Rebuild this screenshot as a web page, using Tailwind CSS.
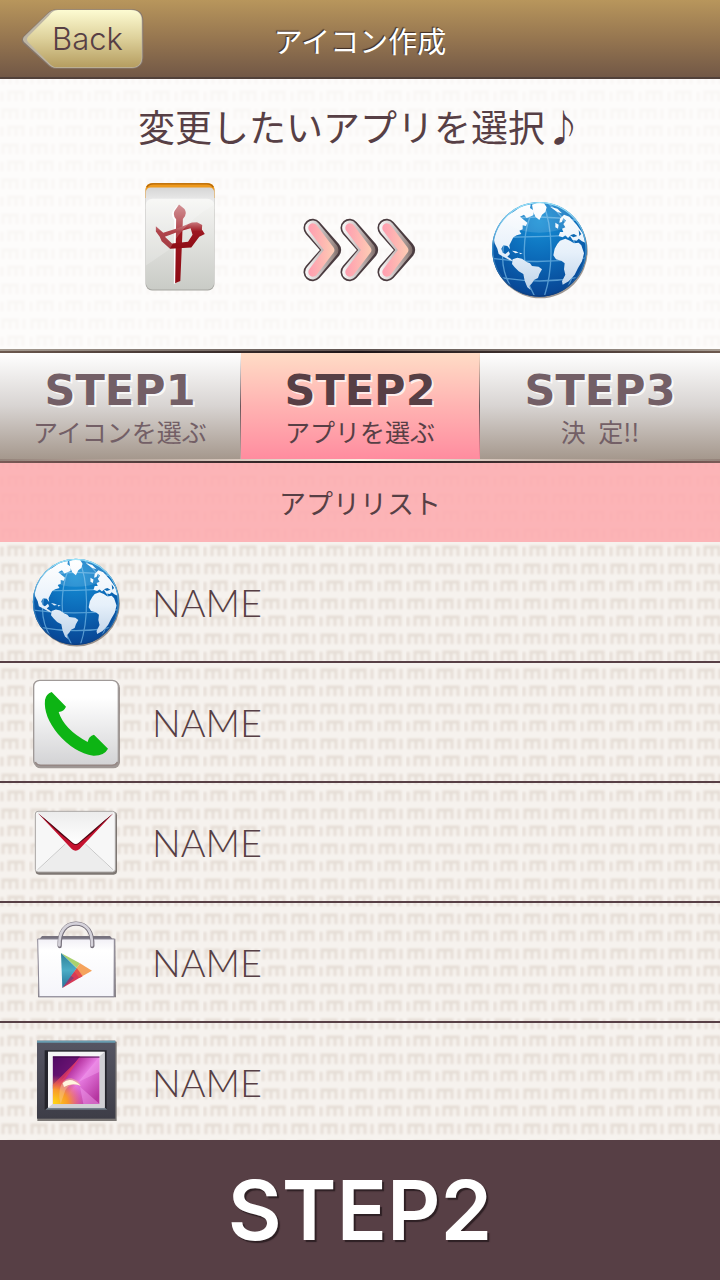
<!DOCTYPE html>
<html lang="ja">
<head>
  <meta charset="UTF-8">
  <meta name="viewport" content="width=device-width, initial-scale=1.0">
  <title>アイコン作成</title>
  <script src="https://cdn.jsdelivr.net/npm/@tailwindcss/browser@4"></script>
</head>
<body class="relative isolate min-h-screen flex flex-col bg-[#f6f2ee] text-[#573f45] font-['Noto_Sans_CJK_JP',sans-serif]">

  <!-- Woven background -->
  <svg class="absolute inset-0 w-full h-full -z-10" aria-hidden="true">
    <defs>
      <filter id="soft" x="-10%" y="-10%" width="120%" height="120%"><feGaussianBlur stdDeviation="1"/></filter>
      <pattern id="weave" width="29" height="35" patternUnits="userSpaceOnUse">
        <g fill="none" stroke="#e5ddd5" stroke-width="3" filter="url(#soft)">
          <path d="M3 14V5H17V14M10 5V14M24 4V14"/>
          <path d="M2 22V31M9 31V22H23V31M16 22V31"/>
        </g>
      </pattern>
    </defs>
    <rect width="100%" height="100%" fill="url(#weave)"/>
  </svg>

  <!-- Shared icon -->
  <svg class="absolute w-0 h-0" aria-hidden="true">
    <defs>
      <radialGradient id="sea" cx=".5" cy=".2" r=".85">
        <stop offset="0" stop-color="#1690d6"/><stop offset=".45" stop-color="#0c6cba"/><stop offset="1" stop-color="#073f8e"/>
      </radialGradient>
      <linearGradient id="land" x1="0" y1="40" x2="0" y2="310" gradientUnits="userSpaceOnUse">
        <stop offset="0" stop-color="#fff"/><stop offset=".55" stop-color="#e6f0fa"/><stop offset="1" stop-color="#b9cfe6"/>
      </linearGradient>
      <linearGradient id="rim" x1="0" y1="0" x2="0" y2="1">
        <stop offset="0" stop-color="#9fe6fb"/><stop offset=".5" stop-color="#3a8fcc"/><stop offset="1" stop-color="#0a3c80"/>
      </linearGradient>
      <clipPath id="disc"><circle cx="178" cy="178" r="140"/></clipPath>
      <symbol id="globe" viewBox="30 30 300 300">
        <circle cx="181" cy="183" r="142" fill="#40352f" opacity=".5" filter="url(#soft)"/>
        <circle cx="178" cy="178" r="142" fill="url(#sea)"/>
        <g clip-path="url(#disc)">
          <g fill="none" stroke="#7fc0ea" stroke-width="4" opacity=".65">
            <path d="M178 34C120 100 120 250 166 322M186 34C222 110 220 240 192 322M160 36C70 90 40 210 98 300M200 36C290 110 310 200 262 295"/>
            <path d="M62 92Q178 70 294 92M40 142Q178 142 318 134M34 205Q178 225 322 203M60 262Q178 284 296 262"/>
          </g>
          <g fill="url(#land)">
            <path d="M100 66L120 52 138 46 152 44 150 54 162 62 160 76 140 84 132 74 120 80 132 90 142 98 138 108 128 106 128 118 118 122 124 132 110 136 100 142 94 154 88 166 90 178 82 168 70 166 64 176 68 188 76 192 86 184 90 192 82 200 92 206 98 214 88 210 70 200 56 192 52 176 44 160 40 140 48 110 70 82Z"/>
            <path d="M96 182L108 184 116 188 106 190ZM118 188L128 190 120 193Z"/>
            <path d="M156 44L172 38 192 40 200 52 196 66 186 74 178 90 166 80 160 66Z"/>
            <path d="M98 208L112 203 126 206 140 216 150 220 156 228 176 230 186 238 178 252 174 264 162 270 156 280 148 288 152 300 142 292 134 272 130 252 116 244 104 232 96 222Z"/>
            <path d="M240 152L256 146 270 152 282 160 296 158 304 166 312 190 306 214 294 234 284 254 266 274 248 284 246 274 256 254 252 238 254 220 244 212 228 208 220 196 224 176 232 162Z"/>
            <path d="M236 138L240 126 250 126 246 116 256 112 250 102 258 92 250 84 246 96 238 98 240 86 252 74 268 80 290 104 308 130 316 158 306 154 296 146 290 152 278 150 270 138 264 144 256 136 248 142Z"/>
            <path d="M226 98L236 104 234 116 226 112ZM210 50L232 56 246 70 232 66Z"/>
          </g>
          <path d="M270 136L282 132 292 138 280 142ZM296 120L304 132 298 138Z" fill="#0d69b3"/>
          <ellipse cx="178" cy="72" rx="112" ry="56" fill="#fff" opacity=".13"/>
        </g>
        <circle cx="178" cy="178" r="140" fill="none" stroke="url(#rim)" stroke-width="4"/>
      </symbol>
    </defs>
  </svg>

  <!-- Header -->
  <header class="relative h-[79px] flex items-center justify-center pt-1 bg-linear-to-b from-[#b8965c] via-[#967650] to-[#725846] border-b-2 border-[#51413a]">
    <button type="button" class="absolute left-5 top-2 w-32 h-16 pl-8 pb-1 text-left text-[31px] leading-none font-light font-[Inter,sans-serif]">
      <svg class="absolute inset-0 w-full h-full" viewBox="60 24 384 192" aria-hidden="true">
        <defs>
          <linearGradient id="gold" x1="0" y1="0" x2="0" y2="1">
            <stop offset="0" stop-color="#fdfbd2"/><stop offset=".5" stop-color="#ddd09a"/><stop offset="1" stop-color="#b59d60"/>
          </linearGradient>
        </defs>
        <path d="M69 110L142 40Q154 28 170 28H398Q430 30 430 64V172Q430 204 398 206H166Q154 206 142 194L69 130Q62 120 69 110Z" fill="#86766a"/>
        <path d="M72 110L142 42Q154 29 170 29H394Q427 30 427 62V170Q427 203 394 204H170Q154 204 142 190L72 126Q66 118 72 110Z" fill="#bdb5a4"/>
        <path d="M84 110L146 48Q158 30 174 30H392Q425 30 425 62V170Q425 202 392 202H172Q158 202 146 188L84 126Q78 118 84 110Z" fill="url(#gold)"/>
      </svg>
      <span class="relative">Back</span>
    </button>
    <h1 class="text-[29px] leading-none text-white [text-shadow:-1px_-1px_1px_#3e2c24]">アイコン作成</h1>
  </header>

  <!-- Preview -->
  <section class="h-[270px] pt-[25px] bg-white/75">
    <h2 class="text-center text-[37px] leading-[44px]">変更したいアプリを選択♪</h2>
    <div class="grid grid-cols-3 w-3/4 mx-auto mt-8 h-[120px] items-center justify-items-center">
      <svg class="w-[78px] h-[140px] pb-7" viewBox="36 24 234 348" role="img" aria-label="中">
        <defs>
          <linearGradient id="tile" x1="0" y1="0" x2="0" y2="1"><stop offset="0" stop-color="#f6f6f4"/><stop offset="1" stop-color="#c9cbc6"/></linearGradient>
          <linearGradient id="tileTop" x1="0" y1="0" x2="0" y2="1"><stop offset="0" stop-color="#d5d5d5"/><stop offset="1" stop-color="#fff"/></linearGradient>
          <linearGradient id="red" x1="0" y1="0" x2="0" y2="1"><stop offset="0" stop-color="#c8777b"/><stop offset=".35" stop-color="#9d1720"/><stop offset="1" stop-color="#8d0b14"/></linearGradient>
        </defs>
        <rect x="46" y="34" width="214" height="333" rx="20" fill="#a5a5a0"/>
        <path d="M46 80V52Q48 33 68 33H238Q258 33 260 52V80Z" fill="#ef9a1d"/>
        <path d="M50 46Q56 36 70 36H236Q250 36 256 46" fill="none" stroke="#b4690b" stroke-width="4"/>
        <rect x="47" y="47" width="212" height="80" rx="14" fill="url(#tileTop)"/>
        <rect x="47" y="82" width="212" height="282" rx="20" fill="url(#tile)"/>
        <path d="M138 345L139 146Q128 134 134 120L148 101 166 114Q176 130 163 145L160 200 154 338Z" fill="#fff" transform="translate(-4 2)"/>
        <g fill="url(#red)">
          <path d="M138 345L141 146Q130 134 136 120L150 100 167 114Q177 130 162 145L160 200 154 338Z"/>
          <path fill-rule="evenodd" d="M78 168L101 188 150 172 190 156 206 155 222 164 221 178 230 192 213 200 188 234 122 238 96 214 90 200 78 184ZM106 200L128 221 178 216 192 194 186 174 150 184Z"/>
        </g>
        <path d="M67 82H238Q258 84 259 102Q170 150 120 240L47 290V102Q48 84 67 82Z" fill="#fff" opacity=".2"/>
      </svg>
      <svg class="w-[116px] h-[66px]" viewBox="38 51 348 198" aria-hidden="true">
        <defs>
          <linearGradient id="edge" x1="43" x2="155" y1="0" y2="0" gradientUnits="userSpaceOnUse"><stop offset="0" stop-color="#fff"/><stop offset=".5" stop-color="#c4bbbb"/><stop offset=".8" stop-color="#9c8c88"/><stop offset="1" stop-color="#6d5a58"/></linearGradient>
          <linearGradient id="peach" x1="60" x2="140" y1="0" y2="0" gradientUnits="userSpaceOnUse"><stop offset="0" stop-color="#ff9fb0"/><stop offset="1" stop-color="#fdcfb4"/></linearGradient>
          <g id="chevron" fill="none" stroke-linecap="round" stroke-linejoin="round">
            <path d="M70 84L128 150L70 216" stroke="#4b3c40" stroke-width="55"/>
            <path d="M70 84L125 150L70 216" stroke="url(#edge)" stroke-width="45"/>
            <path d="M71 84L121 150L71 216" stroke="url(#peach)" stroke-width="28"/>
          </g>
        </defs>
        <use href="#chevron"/><use href="#chevron" x="111"/><use href="#chevron" x="222"/>
      </svg>
      <svg class="w-[100px] h-[100px]" role="img" aria-label="Browser"><use href="#globe"/></svg>
    </div>
  </section>

  <!-- Steps -->
  <div class="h-0.5 bg-linear-to-r from-[#a69c92] via-[#5e5350] to-[#a69c92]"></div>
  <div class="h-0.5 bg-linear-to-r from-[#6c594f] via-[#1d1518] to-[#6c594f]"></div>
  <nav class="grid grid-cols-3 h-[106px] text-center">
    <button type="button" class="pt-1 bg-linear-to-b from-white via-[#d8d4d2] to-[#a5988d] text-[#735f66]">
      <span class="block text-[43px] leading-[46px] font-bold font-['DejaVu_Sans',sans-serif] [text-shadow:2px_2px_0_#fffc]">STEP1</span>
      <span class="block text-[25px] leading-9">アイコンを選ぶ</span>
    </button>
    <button type="button" aria-current="step" class="relative pt-1 bg-linear-to-b from-[#ffdcc6] via-[#ffb3b2] to-[#ff8c9f]">
      <span class="absolute inset-y-0 left-0 w-px bg-linear-to-b from-white via-[#6b565a] to-[#c0a8a4]"></span>
      <span class="absolute inset-y-0 right-0 w-px bg-linear-to-b from-[#ffdcc6] via-[#6b565a] to-[#ff8c9f]"></span>
      <span class="block text-[43px] leading-[46px] font-bold font-['DejaVu_Sans',sans-serif] [text-shadow:2px_2px_0_#fffb]">STEP2</span>
      <span class="block text-[25px] leading-9">アプリを選ぶ</span>
    </button>
    <button type="button" class="pt-1 bg-linear-to-b from-white via-[#d8d4d2] to-[#a5988d] text-[#735f66]">
      <span class="block text-[43px] leading-[46px] font-bold font-['DejaVu_Sans',sans-serif] [text-shadow:2px_2px_0_#fffc]">STEP3</span>
      <span class="block text-[25px] leading-9">決&ensp;定!!</span>
    </button>
  </nav>
  <div class="h-0.5 bg-linear-to-r from-[#94837a] via-[#fdeee2] to-[#94837a]"></div>
  <div class="h-0.5 bg-linear-to-r from-[#7a5a56] via-[#1d1518] to-[#7a5a56]"></div>

  <!-- App list -->
  <h2 class="h-[79px] flex items-center justify-center bg-[#fdadb0]/90 text-[27px] leading-none">アプリリスト</h2>
  <ul class="grow pt-px text-[38px] leading-none font-light">
    <li class="border-b-2 border-[#573f45]">
      <a href="#" class="flex items-center gap-7 pl-7 h-[118px]">
        <span class="w-24 flex justify-center"><svg class="w-[91px] h-[91px]" aria-hidden="true"><use href="#globe"/></svg></span>
        <span class="font-[Lato,sans-serif]">NAME</span>
      </a>
    </li>
    <li class="border-b-2 border-[#573f45]">
      <a href="#" class="flex items-center gap-7 pl-7 h-[118px]">
        <svg class="w-24 h-[118px]" viewBox="84 -9 288 354" aria-hidden="true">
          <defs><linearGradient id="plate" x1="0" y1="0" x2="0" y2="1"><stop offset=".2" stop-color="#fff"/><stop offset="1" stop-color="#d2d2d4"/></linearGradient></defs>
          <rect x="102" y="45" width="258" height="262" rx="20" fill="#7d7370" opacity=".7" filter="url(#soft)"/>
          <rect x="101" y="43" width="254" height="258" rx="18" fill="url(#plate)" stroke="#a09a98" stroke-width="4"/>
          <path d="M106 288Q110 298 122 298H336Q348 298 352 288" fill="none" stroke="#958784" stroke-width="5"/>
          <path d="M155 78L198 122Q192 136 176 138Q192 190 263 228Q266 210 282 206L324 248Q312 270 280 269Q222 260 174 204Q130 150 135 102Q138 84 155 78Z" fill="#0db414"/>
        </svg>
        <span class="font-[Lato,sans-serif]">NAME</span>
      </a>
    </li>
    <li class="border-b-2 border-[#573f45]">
      <a href="#" class="flex items-center gap-7 pl-7 h-[118px]">
        <svg class="w-24 h-[118px]" viewBox="84 -9 288 354" aria-hidden="true">
          <defs><linearGradient id="flap" x1="0" y1="0" x2="0" y2="1"><stop offset="0" stop-color="#ececec"/><stop offset="1" stop-color="#fff"/></linearGradient></defs>
          <rect x="107" y="78" width="244" height="188" rx="10" fill="#57504c" opacity=".75" filter="url(#soft)"/>
          <rect x="106" y="76" width="240" height="182" rx="8" fill="#f7f7f7" stroke="#aaa6a4" stroke-width="3"/>
          <path d="M112 252L196 174M340 252L256 174" stroke="#c8c8c8" stroke-width="3"/>
          <path d="M112 255L200 172L226 190L252 172L340 255Z" fill="#e6e6e6" opacity=".6"/>
          <path d="M114 82L216 190Q227 198 238 190L340 82L236 170Q227 178 218 170Z" fill="#c5122f"/>
          <path d="M114 82L180 143L218 173Q227 180 236 173L274 143L340 82L262 142L234 166Q227 172 220 166L192 142Z" fill="#4d0713"/>
          <path d="M112 78H342L236 170Q227 178 218 170Z" fill="url(#flap)"/>
        </svg>
        <span class="font-[Lato,sans-serif]">NAME</span>
      </a>
    </li>
    <li class="border-b-2 border-[#573f45]">
      <a href="#" class="flex items-center gap-7 pl-7 h-[118px]">
        <svg class="w-24 h-[118px]" viewBox="84 -9 288 354" aria-hidden="true">
          <defs>
            <linearGradient id="bag" x1="0" y1="0" x2="0" y2="1"><stop offset="0" stop-color="#f2f0f6"/><stop offset=".2" stop-color="#fff"/><stop offset="1" stop-color="#f5f5fa"/></linearGradient>
            <linearGradient id="teal" x1="0" y1="0" x2="0" y2="1"><stop offset="0" stop-color="#2d7f95"/><stop offset=".5" stop-color="#4bacc6"/><stop offset="1" stop-color="#256f96"/></linearGradient>
          </defs>
          <path d="M116 98H346L348 274H114Z" fill="#57505a" opacity=".7" filter="url(#soft)"/>
          <path d="M126 90H330L340 102H116Z" fill="#77727e"/>
          <path d="M113 99H343L342 272H117Z" fill="url(#bag)" stroke="#8f8b98" stroke-width="3"/>
          <path d="M179 120C178 78 196 53 228 53S278 78 277 120" fill="none" stroke="#77717c" stroke-width="13" stroke-linecap="round"/>
          <path d="M178 118C177 76 196 52 228 52S277 76 276 118" fill="none" stroke="#d5d2da" stroke-width="8" stroke-linecap="round"/>
          <path d="M183 141L240 172L230 186Z" fill="#a9d16d"/>
          <path d="M187 246L222 196L248 210Z" fill="#d83a55"/>
          <path d="M187 246L210 208L222 216Z" fill="#8d3e74"/>
          <path d="M240 172L276 194L248 210L228 188Z" fill="#f5a35c"/>
          <path d="M222 196L230 186L248 210L238 216Z" fill="#e4504a"/>
          <path d="M183 141L230 187L187 246Z" fill="url(#teal)"/>
        </svg>
        <span class="font-[Lato,sans-serif]">NAME</span>
      </a>
    </li>
    <li>
      <a href="#" class="flex items-center gap-7 pl-7 h-[117px]">
        <svg class="w-24 h-[117px]" viewBox="84 354 288 351" aria-hidden="true">
          <defs>
            <linearGradient id="photo" x1="0" y1="0" x2="1" y2=".8"><stop offset="0" stop-color="#5a0a63"/><stop offset=".35" stop-color="#b02a98"/><stop offset=".6" stop-color="#e67ae0"/><stop offset="1" stop-color="#b5359f"/></linearGradient>
            <linearGradient id="frame" x1="0" y1="0" x2="0" y2="1"><stop offset="0" stop-color="#565663"/><stop offset="1" stop-color="#3d3d47"/></linearGradient>
            <radialGradient id="flame" cx="0" cy="1" r="1"><stop offset="0" stop-color="#ffdc12"/><stop offset=".5" stop-color="#f89a2a"/><stop offset="1" stop-color="#e84a60" stop-opacity="0"/></radialGradient>
            <clipPath id="photoBox"><rect x="158" y="454" width="141" height="143"/></clipPath>
          </defs>
          <rect x="112" y="410" width="238" height="238" fill="#2a2526" opacity=".6" filter="url(#soft)"/>
          <rect x="111" y="407" width="235" height="234" fill="url(#frame)"/>
          <path d="M111 410H346" stroke="#699db0" stroke-width="6"/>
          <path d="M134 436H320V614H134Z" fill="#24242b"/>
          <path d="M136 614L146 606H312L322 614Z" fill="#74808c"/>
          <rect x="144" y="440" width="170" height="168" fill="#f4f4f5"/>
          <path d="M314 440V608H144L158 597H299V454Z" fill="#d0d0d4"/>
          <g clip-path="url(#photoBox)">
            <rect x="158" y="454" width="141" height="143" fill="url(#photo)"/>
            <path d="M158 454H240L190 520L158 552Z" fill="#4c0a62" opacity=".7"/>
            <path d="M158 540L242 456L200 516L162 575Z" fill="#e0395f" opacity=".8"/>
            <path d="M299 454L236 530L299 500ZM240 545L299 597H250Z" fill="#f4a2ef" opacity=".45"/>
            <rect x="158" y="510" width="92" height="87" fill="url(#flame)"/>
            <path d="M178 580Q176 520 214 520Q236 526 242 542Q210 530 196 556L182 597Z" fill="#f6c48e" opacity=".5"/>
            <path d="M188 534Q212 512 242 542Q214 532 192 546Z" fill="#fff6de"/>
            <path d="M158 456H299" stroke="#35073f" stroke-width="6" opacity=".5"/>
          </g>
        </svg>
        <span class="font-[Lato,sans-serif]">NAME</span>
      </a>
    </li>
  </ul>

  <!-- Footer -->
  <footer class="h-[140px] flex items-center justify-center bg-[#573f45] text-white text-[83px] leading-none font-semibold font-[Inter,sans-serif] [text-shadow:2px_2px_1px_#2e2024]">STEP2</footer>

</body>
</html>
